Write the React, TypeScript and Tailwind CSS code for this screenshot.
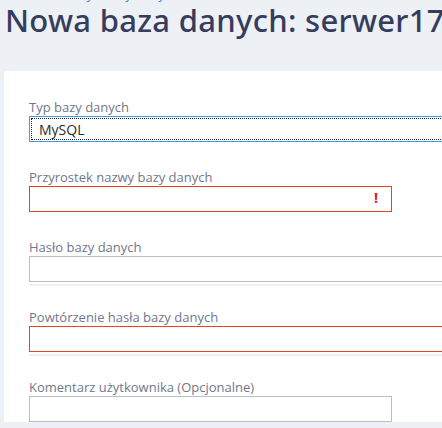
import React from "react";

interface FieldProps {
  label: string;
  wide?: boolean;
  tone?: "normal" | "error" | "focus";
  bar?: boolean;
  children?: React.ReactNode;
}

const borders = {
  normal: "border-[#b7bfcd]",
  error: "border-[#e2461b]",
  focus: "border-[#3e9be6]",
};

const Field: React.FC<FieldProps> = ({ label, wide = false, tone = "normal", bar = false, children }) => {
  return (
    <div className={bar ? "mb-[23px]" : "mb-[27px]"}>
      <label className="block text-[13px] leading-[17px] text-[#717889]">{label}</label>
      <div
        className={`relative h-[26px] border bg-white ${borders[tone]} ${wide ? "w-[640px]" : "w-[363px]"}`}
      >
        {children}
      </div>
      {bar && <div className="mt-[2px] h-[2px] w-[640px] bg-[#eef0f2]" />}
    </div>
  );
};

export default function App() {
  return (
    <div
      className="w-[442px] h-[428px] overflow-hidden bg-[#edf0f4] pl-[4px]"
      style={{ fontFamily: '"Open Sans", "Noto Sans", sans-serif' }}
    >
      <div className="mt-[-14px] h-[16px] whitespace-nowrap pl-[40px] text-[13px] leading-[16px] text-[#1a8fe3]">
        Serwery › Bazy danych
      </div>
      <h1
        className="h-[36px] whitespace-nowrap pl-[1px] text-[31px] font-medium leading-[36px] tracking-[0.3px] text-[#353c5c]"
        style={{ fontFamily: '"Noto Sans", sans-serif' }}
      >
        Nowa baza danych: serwer17
      </h1>
      <div className="mt-[33px] w-[700px] rounded-tl-[3px] bg-white pl-[25px] pt-[28px]">
        <Field label="Typ bazy danych" wide tone="focus">
          <div className="absolute inset-[1px] flex items-center border border-dotted border-[#222] pl-[7px] text-[14px] text-[#2b2b2b]">
            MySQL
          </div>
        </Field>
        <Field label="Przyrostek nazwy bazy danych" tone="error">
          <span className="absolute left-[344px] top-[2px] text-[14px] font-bold leading-[18px] text-[#ee1111]">
            !
          </span>
        </Field>
        <Field label="Hasło bazy danych" wide bar />
        <Field label="Powtórzenie hasła bazy danych" wide tone="error" bar />
        <Field label="Komentarz użytkownika (Opcjonalne)" />
      </div>
    </div>
  );
}
